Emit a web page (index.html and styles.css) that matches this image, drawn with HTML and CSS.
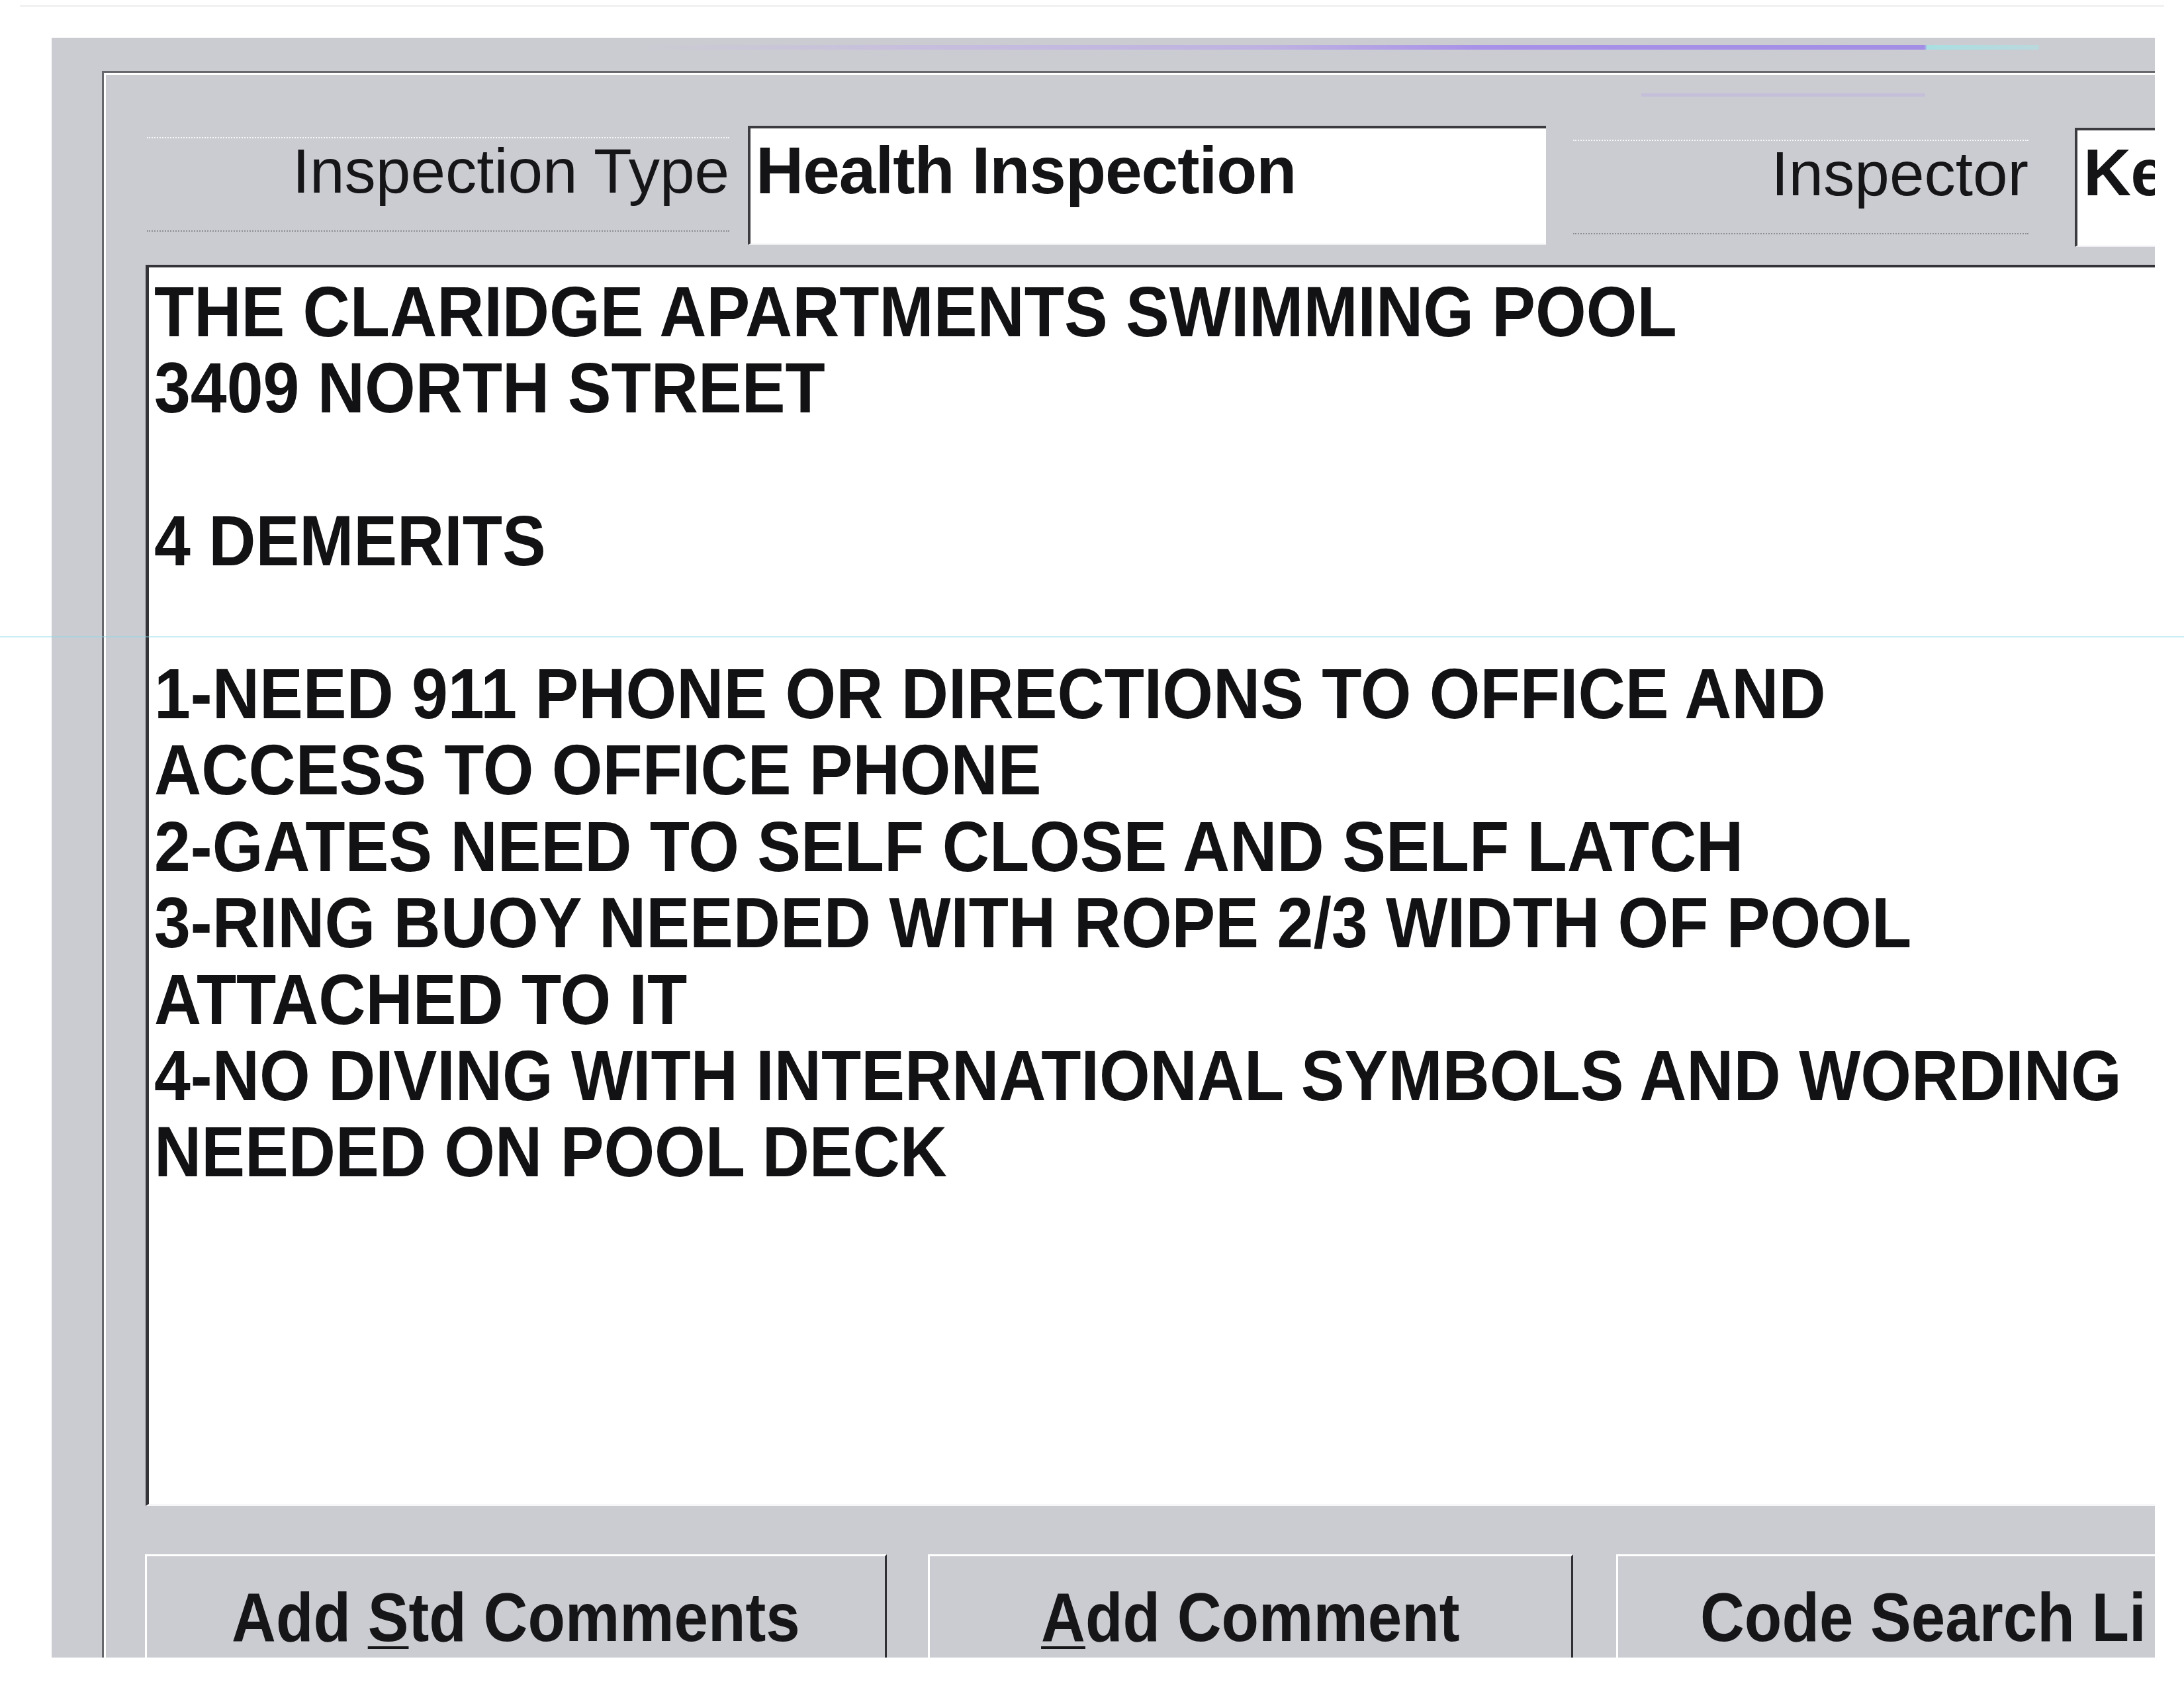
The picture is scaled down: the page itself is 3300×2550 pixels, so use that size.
FILE: index.html
```html
<!DOCTYPE html>
<html lang="en">
<head>
<meta charset="utf-8">
<title>Inspection Comments</title>
<link rel="stylesheet" href="styles.css">
</head>
<body>
<div class="sheet">
  <div class="edge"></div>
  <div class="window">
    <div class="streak"></div>
    <div class="streak-faint"></div>
    <div class="group">
      <div class="row">
        <div class="label label-type">Inspection Type</div>
        <div class="field field-type">Health Inspection</div>
        <div class="label label-insp">Inspector</div>
        <div class="field field-insp">Ke</div>
      </div>
      <div class="memo">
        <div class="memo-text">THE CLARIDGE APARTMENTS SWIMMING POOL
3409 NORTH STREET

4 DEMERITS

1-NEED 911 PHONE OR DIRECTIONS TO OFFICE AND
ACCESS TO OFFICE PHONE
2-GATES NEED TO SELF CLOSE AND SELF LATCH
3-RING BUOY NEEDED WITH ROPE 2/3 WIDTH OF POOL
ATTACHED TO IT
4-NO DIVING WITH INTERNATIONAL SYMBOLS AND WORDING
NEEDED ON POOL DECK</div>
      </div>
      <div class="buttons">
        <div class="btn btn-std"><span class="btn-label">Add <u>S</u>td Comments</span></div>
        <div class="btn btn-add"><span class="btn-label"><u>A</u>dd Comment</span></div>
        <div class="btn btn-code"><span class="btn-label btn-label-left">Code Search Li</span></div>
      </div>
    </div>
  </div>
</div>
<div class="scan-line"></div>
</body>
</html>
```
FILE: styles.css
```css
html, body {
  margin: 0;
  padding: 0;
  background: #ffffff;
}

body {
  position: relative;
  width: 3300px;
  height: 2550px;
  overflow: hidden;
  font-family: "Liberation Sans", Arial, sans-serif;
  color: #1c1c1f;
}

.sheet {
  padding-top: 8px;
}

.edge {
  margin: 0 30px;
  border-top: 2px solid #ececec;
}

.window {
  position: relative;
  margin-top: 47px;
  margin-left: 78px;
  width: 3178px;
  height: 2447px;
  overflow: hidden;
  background: #cbccd2;
}

.streak {
  position: absolute;
  top: 11px;
  left: 890px;
  width: 2113px;
  height: 7px;
  background: linear-gradient(to right,
    rgba(200, 185, 225, 0) 0%,
    rgba(196, 178, 232, 0.55) 20%,
    rgba(182, 160, 236, 0.6) 45%,
    #a891e8 60%,
    #a38ee6 91.8%,
    #a9dfe2 92%,
    rgba(175, 225, 228, 0.6) 100%);
}

.streak-faint {
  position: absolute;
  top: 84px;
  left: 2402px;
  width: 429px;
  height: 5px;
  background: rgba(190, 165, 232, 0.35);
}

.group {
  margin-top: 50px;
  margin-left: 76px;
  width: 3300px;
  height: 2600px;
  border-top: 3px solid #66676d;
  border-left: 3px solid #66676d;
  box-shadow: inset 3px 3px 0 #ffffff;
}

.row {
  display: flex;
  align-items: flex-start;
  margin-top: 80px;
  height: 180px;
}

.label {
  flex: none;
  height: 143px;
  box-sizing: border-box;
  border-top: 2px dotted rgba(255, 255, 255, 0.85);
  border-bottom: 2px dotted #8c8d93;
  font-size: 94.5px;
  line-height: 98px;
  text-align: right;
  white-space: nowrap;
  color: #161618;
}

.label-type {
  margin-left: 65px;
  margin-top: 17px;
  width: 880px;
}

.label-insp {
  margin-left: 41px;
  margin-top: 21px;
  width: 688px;
}

.field {
  flex: none;
  box-sizing: border-box;
  height: 180px;
  background: #ffffff;
  border-top: 4px solid #3b3b40;
  border-left: 4px solid #3b3b40;
  border-bottom: 2px solid #eeeef0;
  padding-top: 13px;
  font-weight: bold;
  font-size: 100px;
  line-height: 100px;
  letter-spacing: -1px;
  white-space: nowrap;
  overflow: hidden;
  color: #141416;
}

.field-type {
  margin-left: 28px;
  width: 1206px;
  padding-left: 8px;
}

.field-insp {
  margin-left: 70px;
  margin-top: 3px;
  width: 400px;
  padding-left: 9px;
}

.memo {
  box-sizing: border-box;
  margin-top: 30px;
  margin-left: 63px;
  width: 3200px;
  height: 1875px;
  background: #ffffff;
  border-top: 4px solid #333338;
  border-left: 5px solid #333338;
  border-bottom: 3px solid #f7f7f9;
  padding-top: 9px;
  padding-left: 8px;
  overflow: hidden;
}

.memo-text {
  white-space: pre;
  font-weight: bold;
  font-size: 108px;
  line-height: 115.4px;
  color: #121214;
  transform: scaleX(0.913);
  transform-origin: 0 0;
}

.buttons {
  display: flex;
  margin-top: 73px;
  margin-left: 62px;
  height: 220px;
}

.btn {
  flex: none;
  box-sizing: border-box;
  height: 220px;
  border-top: 3px solid #ffffff;
  border-left: 3px solid #ffffff;
  border-right: 3px solid #2f2f34;
  padding-top: 40px;
  text-align: center;
  font-weight: bold;
  font-size: 104px;
  line-height: 104px;
  white-space: nowrap;
  overflow: hidden;
  color: #161618;
}

.btn-std {
  width: 1121px;
}

.btn-add {
  margin-left: 62px;
  width: 975px;
}

.btn-code {
  margin-left: 65px;
  width: 1100px;
  text-align: left;
  padding-left: 124px;
}

.btn-label {
  display: inline-block;
  transform: scaleX(0.89);
  transform-origin: 50% 50%;
}

.btn-label-left {
  transform-origin: 0 50%;
}

.btn-label u {
  text-decoration-thickness: 4px;
  text-underline-offset: 8px;
}

.scan-line {
  position: absolute;
  top: 961px;
  left: 0;
  width: 3300px;
  height: 2px;
  background: rgba(140, 215, 230, 0.45);
}
```
